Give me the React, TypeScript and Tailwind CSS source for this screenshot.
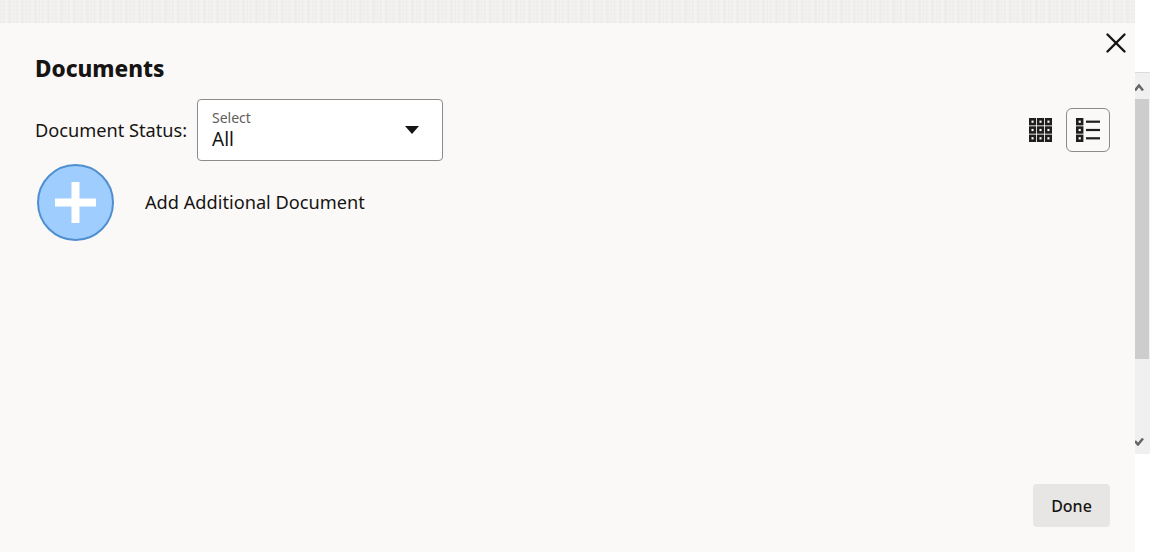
import { X } from 'lucide-react';

function GridIcon() {
  const cells = [0, 8.3, 16.6];
  return (
    <svg width="23" height="24" viewBox="0 0 24 24" preserveAspectRatio="none">
      {cells.map((y) =>
        cells.map((x) => (
          <g key={`${x}-${y}`}>
            <rect x={x} y={y} width="7.4" height="7.4" fill="#1f1e1c" />
            <rect x={x + 2.6} y={y + 2.6} width="2.2" height="2.2" fill="#fbf9f8" />
          </g>
        ))
      )}
    </svg>
  );
}

function ListIcon() {
  const rows = [0, 8.3, 16.6];
  return (
    <svg width="24" height="24" viewBox="0 0 24 24">
      {rows.map((y) => (
        <g key={y}>
          <rect x="0" y={y} width="7.4" height="7.4" fill="#1f1e1c" />
          <rect x="2.6" y={y + 2.6} width="2.2" height="2.2" fill="#fbf9f8" />
          <rect x="10" y={y + 2.6} width="14" height="2.2" fill="#1f1e1c" />
        </g>
      ))}
    </svg>
  );
}

function PlusCircle() {
  return (
    <svg width="78" height="78" viewBox="0 0 78 78">
      <circle cx="39.5" cy="38.5" r="37.5" fill="#9fcdfd" stroke="#4f8fd0" strokeWidth="2" />
      <rect x="19" y="34.5" width="41" height="8" fill="#fff" />
      <rect x="35.5" y="18" width="8" height="41" fill="#fff" />
    </svg>
  );
}

function Scrollbar() {
  return (
    <div className="w-[15px] h-full flex flex-col bg-white">
      <div className="h-[73px] border-b border-[#dcdcdc]" />
      <div className="h-[381px] bg-[#f0f0f0] flex flex-col overflow-hidden">
        <div className="h-[26px] flex items-center">
          <svg width="9" height="8" viewBox="0 0 9 8" className="mt-[4px]">
            <path d="M0 6.5 L4 1.5 L8 6.5" fill="none" stroke="#666" strokeWidth="2.5" />
          </svg>
        </div>
        <div className="h-[260px] w-[14px] bg-[#cdcdcd]" />
        <div className="flex-1 flex items-end pb-[8px]">
          <svg width="9" height="8" viewBox="0 0 9 8">
            <path d="M0 3 L3 6.5 L8 0.5" fill="none" stroke="#666" strokeWidth="2.5" />
          </svg>
        </div>
      </div>
    </div>
  );
}

export default function App() {
  return (
    <div className="w-[1150px] h-[552px] flex overflow-hidden bg-white font-['Noto_Sans',sans-serif] text-[#161513]">
      <div className="w-[1135px] h-full flex flex-col">
        {/* textured page behind the dialog */}
        <div className="h-[23px] bg-[#f1efee] bg-[repeating-linear-gradient(90deg,rgba(232,230,229,0.6)_0px,rgba(247,246,245,0.6)_2px,rgba(236,234,233,0.6)_3px,rgba(247,246,245,0.6)_7px,rgba(234,232,231,0.6)_9px,rgba(246,245,244,0.6)_13px),repeating-linear-gradient(0deg,#ebe9e8_0px,#f5f4f3_3px,#eeedec_5px,#f4f3f2_8px)]" />

        {/* Dialog */}
        <div className="relative flex-1 flex flex-col bg-[#fbf9f8] pl-[35px] pr-[25px] pb-[25px]">
          <button className="absolute top-[3px] right-[1px] w-[36px] h-[34px] flex items-center justify-center">
            <X size={34} strokeWidth={1.7} color="#161513" />
          </button>

          <h2 className="mt-[31px] h-[30px] text-[22.5px] leading-[30px] font-extrabold">Documents</h2>

          <div className="mt-[15px] flex items-center">
            <span className="text-[18.2px] leading-[24px] w-[162px] -mt-[1px]">Document Status:</span>
            <div className="w-[246px] h-[62px] bg-white border border-[#8e8c8a] rounded-[4px] flex items-center justify-between pl-[14px] pr-[23px]">
              <div className="flex flex-col mt-[1px]">
                <span className="text-[14px] leading-[16px] text-[#5f5e5c]">Select</span>
                <span className="text-[19px] leading-[24px] mt-[1px]">All</span>
              </div>
              <svg width="14" height="8" viewBox="0 0 14 8" className="-mt-[1px]">
                <path d="M0 0 H14 L7 8 Z" fill="#161513" />
              </svg>
            </div>
            <div className="ml-auto flex items-center gap-[14px]">
              <GridIcon />
              <div className="w-[44px] h-[44px] border border-[#8e8c8a] rounded-[6px] flex items-center justify-center">
                <ListIcon />
              </div>
            </div>
          </div>

          <div className="mt-[3px] flex items-center">
            <div className="ml-[1px]">
              <PlusCircle />
            </div>
            <span className="ml-[31px] text-[18.2px] leading-[24px] -mt-[2px]">Add Additional Document</span>
          </div>

          <div className="mt-auto flex justify-end">
            <button className="w-[77px] h-[43px] rounded-[4px] bg-[#e8e6e5] text-[16px] font-medium">Done</button>
          </div>
        </div>
      </div>
      <Scrollbar />
    </div>
  );
}
